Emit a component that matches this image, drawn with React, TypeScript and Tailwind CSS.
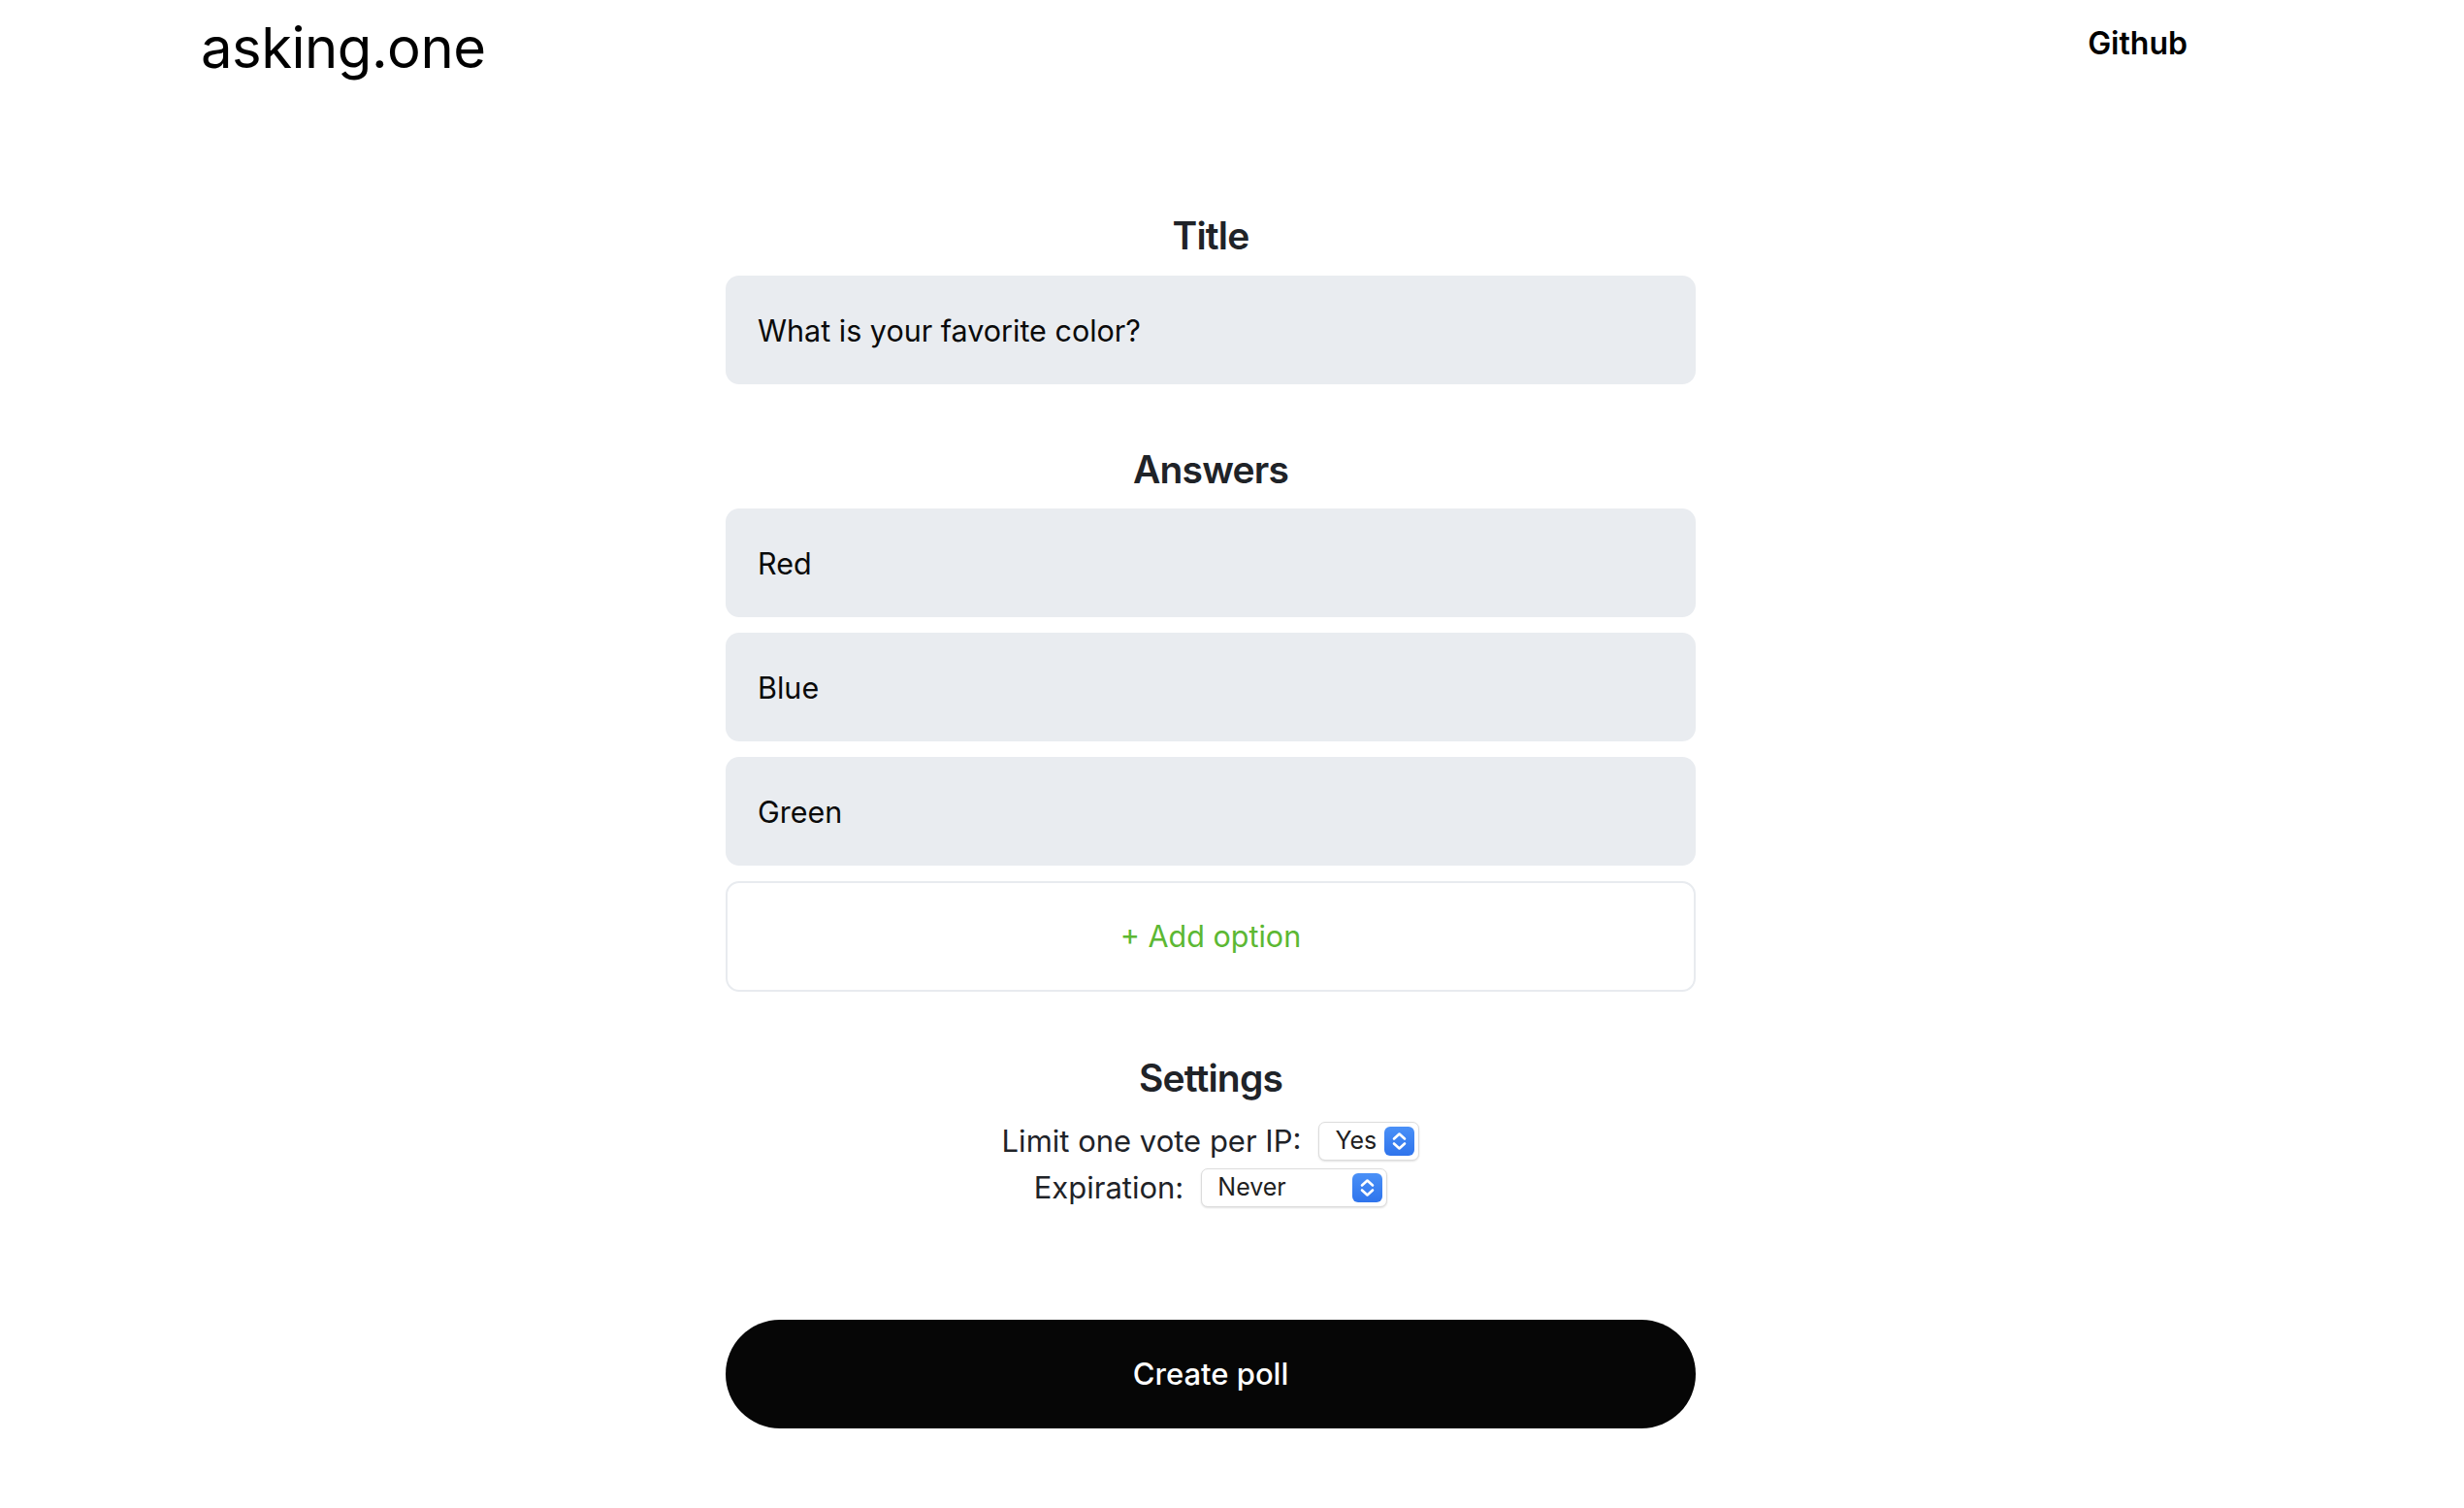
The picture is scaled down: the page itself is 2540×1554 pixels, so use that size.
import React, { useState } from 'react';

const font = { fontFamily: 'Inter, "Noto Sans", "Liberation Sans", sans-serif' };

const Chevrons = () => (
  <svg viewBox="0 0 31 30" className="w-full h-full" fill="none">
    <path d="M10 12.5 L15.5 7.5 L21 12.5" stroke="white" strokeWidth="2.6" strokeLinecap="round" strokeLinejoin="round" />
    <path d="M10 17.5 L15.5 22.5 L21 17.5" stroke="white" strokeWidth="2.6" strokeLinecap="round" strokeLinejoin="round" />
  </svg>
);

interface NativeSelectProps {
  value: string;
  options: string[];
  widthClass: string;
  onChange: (v: string) => void;
}

const NativeSelect: React.FC<NativeSelectProps> = ({ value, options, widthClass, onChange }) => (
  <div className={`relative h-[40px] ${widthClass}`}>
    <select
      value={value}
      onChange={(e) => onChange(e.target.value)}
      style={font}
      className="appearance-none w-full h-full bg-white border border-[#dcdcdc] rounded-[7px] shadow-[0_1px_2px_rgba(0,0,0,0.12)] pl-[16px] pr-[40px] text-[25px] text-[#1f1f1f] outline-none"
    >
      {options.map(o => (
        <option key={o} value={o}>{o}</option>
      ))}
    </select>
    <div className="pointer-events-none absolute right-[5px] top-[5px] w-[31px] h-[30px] rounded-[6px] bg-gradient-to-b from-[#4a90f7] to-[#2f74ec]">
      <Chevrons />
    </div>
  </div>
);

const Field: React.FC<{ value: string; onChange: (v: string) => void }> = ({ value, onChange }) => (
  <input
    type="text"
    value={value}
    onChange={(e) => onChange(e.target.value)}
    style={font}
    className="w-full h-[112px] bg-[#e9ecf0] rounded-[14px] px-[33px] text-[30.5px] text-[#0a0a0a] outline-none"
  />
);

export default function App() {
  const [title, setTitle] = useState('What is your favorite color?');
  const [answers, setAnswers] = useState(['Red', 'Blue', 'Green']);
  const [limitIp, setLimitIp] = useState('Yes');
  const [expiration, setExpiration] = useState('Never');

  const updateAnswer = (i: number, v: string) => {
    setAnswers(prev => prev.map((a, idx) => (idx === i ? v : a)));
  };

  return (
    <div style={font} className="min-h-screen bg-white">
      {/* Header */}
      <header className="flex justify-between items-start pl-[207px] pr-[285px] pt-[20px]">
        <div className="text-[58px] leading-none text-black tracking-[-0.5px]">asking.one</div>
        <a className="mt-[9px] text-[32px] leading-none font-semibold text-black">Github</a>
      </header>

      {/* Form */}
      <main className="flex justify-center pr-[44px] pt-[141px] pb-[80px]">
        <div className="w-[1000px] flex flex-col">
          <h2 className="text-center text-[39px] leading-[48px] font-semibold tracking-[-0.8px] text-[#1f2328]">Title</h2>
          <div className="mt-[17px]">
            <Field value={title} onChange={setTitle} />
          </div>

          <h2 className="mt-[64px] text-center text-[39px] leading-[48px] font-semibold tracking-[-0.8px] text-[#1f2328]">Answers</h2>
          <div className="mt-[16px] flex flex-col gap-[16px]">
            {answers.map((a, i) => (
              <Field key={i} value={a} onChange={(v) => updateAnswer(i, v)} />
            ))}
            <button
              onClick={() => setAnswers(prev => [...prev, ''])}
              className="h-[114px] w-full bg-white border-2 border-[#e8ebef] rounded-[14px] text-[30.5px] text-[#5cb833]"
            >
              + Add option
            </button>
          </div>

          <h2 className="mt-[65px] text-center text-[39px] leading-[48px] font-semibold tracking-[-0.8px] text-[#1f2328]">Settings</h2>
          <div className="mt-[21px] flex flex-col items-center gap-[8px]">
            <div className="flex items-center gap-[18px] h-[40px]">
              <span className="text-[31px] leading-[40px] text-[#1f2328]">Limit one vote per IP:</span>
              <NativeSelect value={limitIp} options={['Yes', 'No']} widthClass="w-[104px]" onChange={setLimitIp} />
            </div>
            <div className="flex items-center gap-[18px] h-[40px]">
              <span className="text-[31px] leading-[40px] text-[#1f2328]">Expiration:</span>
              <NativeSelect
                value={expiration}
                options={['Never', '1 hour', '1 day', '1 week']}
                widthClass="w-[192px]"
                onChange={setExpiration}
              />
            </div>
          </div>

          <button className="mt-[116px] h-[112px] w-full rounded-full bg-[#060606] text-white text-[31px] font-medium">
            Create poll
          </button>
        </div>
      </main>
    </div>
  );
}
